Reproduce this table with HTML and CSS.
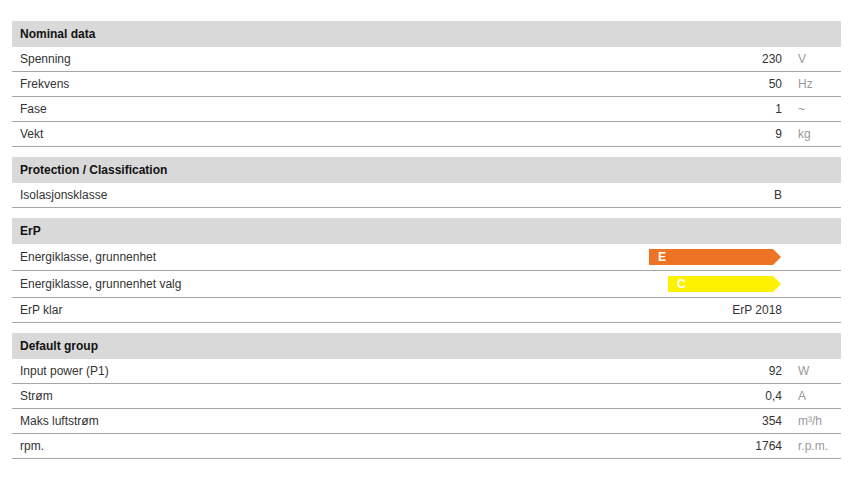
FILE: index.html
```html
<!DOCTYPE html>
<html>
<head>
<meta charset="utf-8">
<link rel="stylesheet" href="styles.css">
</head>
<body>
<div class="wrap">
  <table class="spec">
    <tr class="head"><th colspan="3">Nominal data</th></tr>
    <tr><td class="lbl">Spenning</td><td class="val">230</td><td class="unit">V</td></tr>
    <tr><td class="lbl">Frekvens</td><td class="val">50</td><td class="unit">Hz</td></tr>
    <tr><td class="lbl">Fase</td><td class="val">1</td><td class="unit">~</td></tr>
    <tr><td class="lbl">Vekt</td><td class="val">9</td><td class="unit">kg</td></tr>
  </table>
  <table class="spec">
    <tr class="head"><th colspan="3">Protection / Classification</th></tr>
    <tr><td class="lbl">Isolasjonsklasse</td><td class="val">B</td><td class="unit"></td></tr>
  </table>
  <table class="spec">
    <tr class="head"><th colspan="3">ErP</th></tr>
    <tr class="erow"><td class="lbl">Energiklasse, grunnenhet</td><td class="val"><span class="elabel e">E</span></td><td class="unit"></td></tr>
    <tr class="erow"><td class="lbl">Energiklasse, grunnenhet valg</td><td class="val"><span class="elabel c">C</span></td><td class="unit"></td></tr>
    <tr><td class="lbl">ErP klar</td><td class="val">ErP 2018</td><td class="unit"></td></tr>
  </table>
  <table class="spec">
    <tr class="head"><th colspan="3">Default group</th></tr>
    <tr><td class="lbl">Input power (P1)</td><td class="val">92</td><td class="unit">W</td></tr>
    <tr><td class="lbl">Strøm</td><td class="val">0,4</td><td class="unit">A</td></tr>
    <tr><td class="lbl">Maks luftstrøm</td><td class="val">354</td><td class="unit">m³/h</td></tr>
    <tr><td class="lbl">rpm.</td><td class="val">1764</td><td class="unit">r.p.m.</td></tr>
  </table>
</div>
</body>
</html>
```
FILE: styles.css
```css
body {
  margin: 8px;
  background: #fff;
  font-family: "Liberation Sans", Arial, sans-serif;
  font-size: 12px;
  color: #333;
}
.wrap {
  padding: 13px 10px 0 4px;
}
.spec {
  width: 829px;
  border-collapse: collapse;
  margin-bottom: 10px;
}
.spec th {
  background: #d9d9d9;
  text-align: left;
  font-weight: bold;
  color: #111;
  height: 26px;
  padding: 0 8px;
}
.spec td {
  height: 24px;
  padding: 0;
  border-bottom: 1px solid #a6a6a6;
  vertical-align: middle;
}
.spec .erow td {
  height: 26px;
}
.lbl {
  padding-left: 8px !important;
}
.val {
  text-align: right;
  padding-right: 8px !important;
}
.unit {
  width: 43px;
  padding-left: 8px !important;
  color: #999;
}
.elabel {
  display: inline-block;
  position: relative;
  height: 16px;
  line-height: 16px;
  color: #fff;
  font-weight: bold;
  text-align: left;
  padding-left: 9px;
  box-sizing: border-box;
  vertical-align: middle;
  margin-right: 9px;
}
.elabel::after {
  content: "";
  position: absolute;
  right: -8px;
  top: 0;
  border-top: 8px solid transparent;
  border-bottom: 8px solid transparent;
  border-left: 8px solid currentColor;
}
.elabel.e {
  width: 124px;
  background: #ef7324;
}
.elabel.e::after { border-left-color: #ef7324; }
.elabel.c {
  width: 105px;
  background: #fff200;
}
.elabel.c::after { border-left-color: #fff200; }
```
